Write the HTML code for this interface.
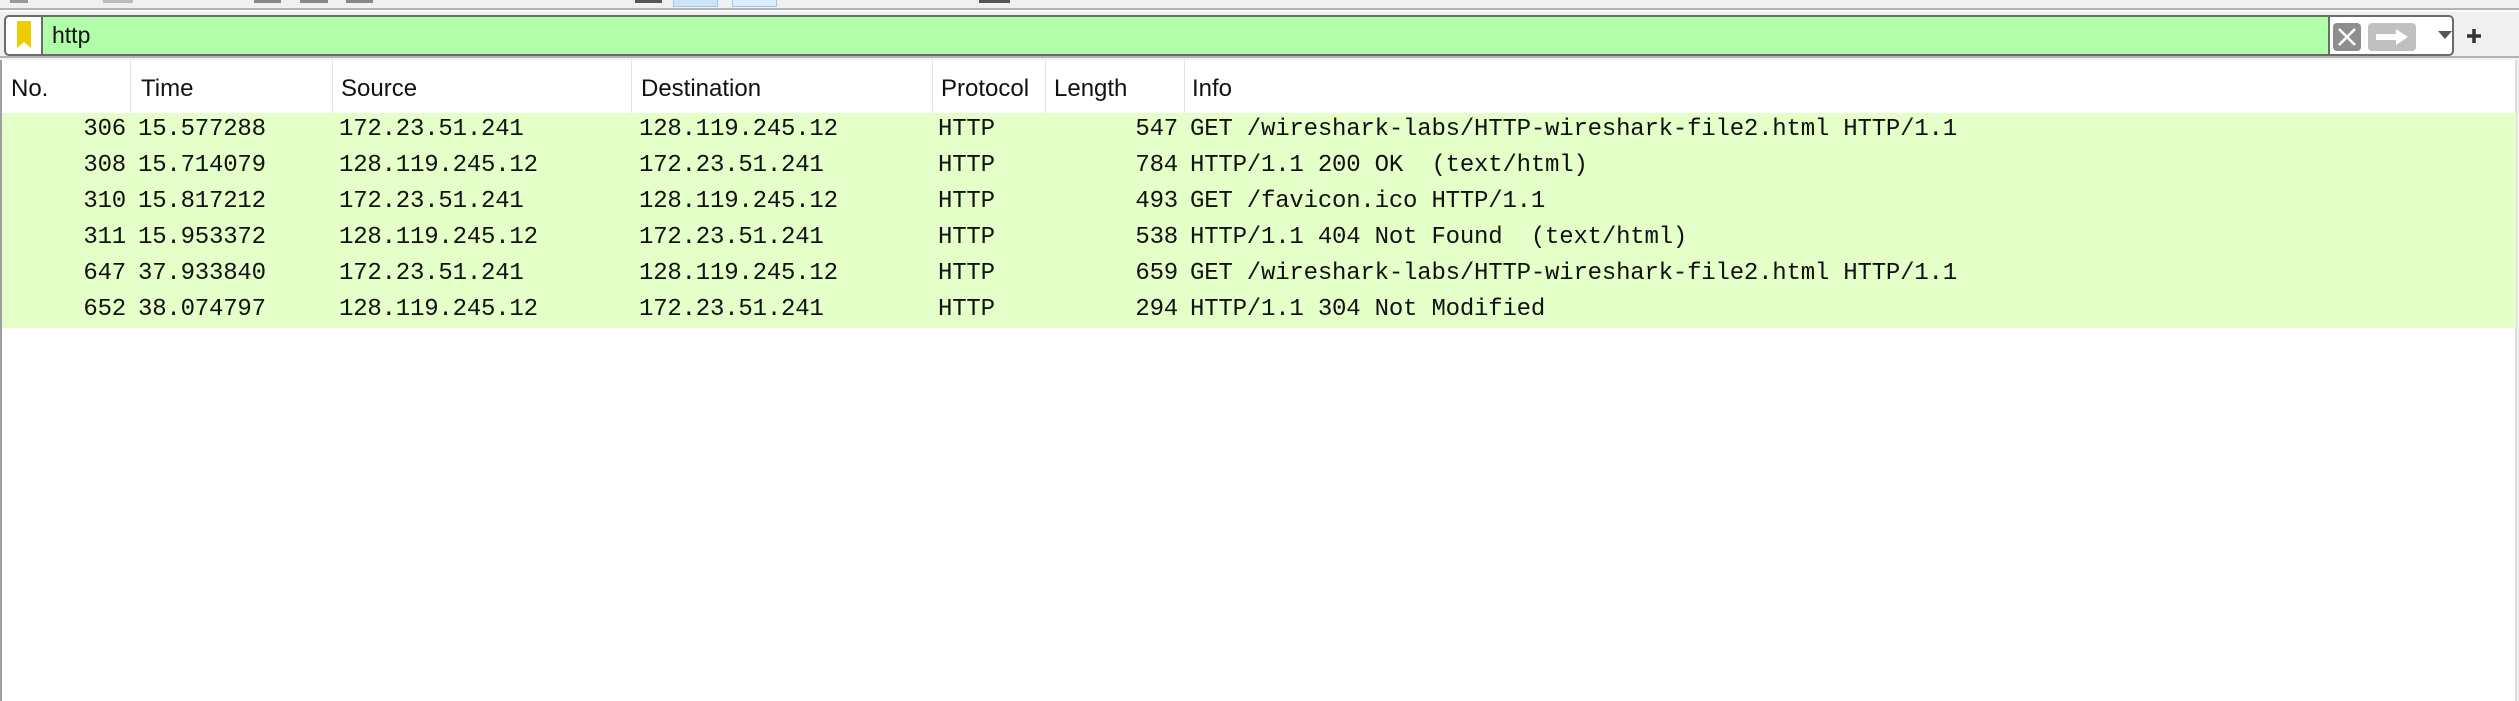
<!DOCTYPE html>
<html><head><meta charset="utf-8"><style>
body{margin:0;width:2519px;height:701px;background:#f0f0f0;position:relative;overflow:hidden;font-family:"Liberation Sans",sans-serif}
.a{position:absolute}
.mono{font-family:"Liberation Mono",monospace;font-size:24px;color:#111;white-space:pre;letter-spacing:-0.2px}
.h{font-size:24px;color:#111;white-space:pre}
</style></head><body>
<div class="a" style="left:10px;top:0;width:18px;height:3px;background:#999"></div>
<div class="a" style="left:103px;top:0;width:30px;height:3px;background:#bbb"></div>
<div class="a" style="left:254px;top:0;width:27px;height:3px;background:#888"></div>
<div class="a" style="left:300px;top:0;width:28px;height:3px;background:#888"></div>
<div class="a" style="left:346px;top:0;width:27px;height:3px;background:#888"></div>
<div class="a" style="left:635px;top:0;width:27px;height:3px;background:#555"></div>
<div class="a" style="left:673px;top:0;width:43px;height:6px;background:#cde4f7;border:1px solid #99c8ee;border-top:none"></div>
<div class="a" style="left:732px;top:0;width:43px;height:6px;background:#dcecfa;border:1px solid #99c8ee;border-top:none"></div>
<div class="a" style="left:979px;top:0;width:31px;height:3px;background:#555"></div>
<div class="a" style="left:0;top:8px;width:2519px;height:2px;background:#b4b4b4"></div>
<div class="a" style="left:0;top:10px;width:2519px;height:2px;background:#fafafa"></div>
<!-- filter bar -->
<div class="a" style="left:4px;top:15px;width:2446px;height:37px;border:2px solid #6b6b6b;border-radius:5px;background:#fff;overflow:hidden">
 <div class="a" style="left:35px;top:0;width:2285px;height:37px;background:#b1feaa;border-left:2px solid #6b6b6b;border-right:2px solid #6b6b6b"></div>
 <svg class="a" style="left:10px;top:4px" width="16" height="28"><path d="M1 0H15V27L8 21L1 27Z" fill="#eecc00"/></svg>
 <div class="a h" style="left:46px;top:5px;font-size:23px">http</div>
 <div class="a" style="left:2327px;top:6px;width:28px;height:28px;background:#8e8e8e;border-radius:4px"><svg width="28" height="28"><path d="M6 6L22 22M22 6L6 22" stroke="#fff" stroke-width="2.5"/></svg></div>
 <div class="a" style="left:2362px;top:6px;width:48px;height:28px;background:#c0c0c0;border-radius:4px"><svg width="48" height="28"><path d="M8 11H28V6L40 14L28 22V17H8Z" fill="#fff"/></svg></div>
 <svg class="a" style="left:2432px;top:14px" width="14" height="8"><path d="M0 0H14L7 8Z" fill="#555"/></svg>
</div>
<svg class="a" style="left:2465px;top:27px" width="18" height="18"><path d="M9 2V16M2 9H16" stroke="#333" stroke-width="3.5"/></svg>
<div class="a" style="left:0;top:56px;width:2519px;height:2px;background:#b4b4b4"></div>
<!-- list -->
<div class="a" style="left:0;top:60px;width:2517px;height:641px;background:#fff;border-left:2px solid #a0a0a0;border-right:2px solid #ddd;box-sizing:border-box"></div>
<div class="a" style="left:130px;top:60px;width:1px;height:53px;background:#e5e5e5"></div>
<div class="a" style="left:332px;top:60px;width:1px;height:53px;background:#e5e5e5"></div>
<div class="a" style="left:631px;top:60px;width:1px;height:53px;background:#e5e5e5"></div>
<div class="a" style="left:932px;top:60px;width:1px;height:53px;background:#e5e5e5"></div>
<div class="a" style="left:1045px;top:60px;width:1px;height:53px;background:#e5e5e5"></div>
<div class="a" style="left:1184px;top:60px;width:1px;height:53px;background:#e5e5e5"></div>
<div class="a h" style="left:11px;top:75px">No.</div>
<div class="a h" style="left:141px;top:75px">Time</div>
<div class="a h" style="left:341px;top:75px">Source</div>
<div class="a h" style="left:641px;top:75px">Destination</div>
<div class="a h" style="left:941px;top:75px">Protocol</div>
<div class="a h" style="left:1054px;top:75px">Length</div>
<div class="a h" style="left:1192px;top:75px">Info</div>
<div class="a" style="left:2px;top:113px;width:2514px;height:215px;background:#e4ffc7"></div>
<div class="a" style="left:0;top:113px">
<div class="a mono" style="left:0;top:-1px;width:126px;text-align:right;line-height:36px">306
308
310
311
647
652</div>
<div class="a mono" style="left:138px;top:-1px;line-height:36px">15.577288
15.714079
15.817212
15.953372
37.933840
38.074797</div>
<div class="a mono" style="left:339px;top:-1px;line-height:36px">172.23.51.241
128.119.245.12
172.23.51.241
128.119.245.12
172.23.51.241
128.119.245.12</div>
<div class="a mono" style="left:639px;top:-1px;line-height:36px">128.119.245.12
172.23.51.241
128.119.245.12
172.23.51.241
128.119.245.12
172.23.51.241</div>
<div class="a mono" style="left:938px;top:-1px;line-height:36px">HTTP
HTTP
HTTP
HTTP
HTTP
HTTP</div>
<div class="a mono" style="left:1100px;top:-1px;width:78px;text-align:right;line-height:36px">547
784
493
538
659
294</div>
<div class="a mono" style="left:1190px;top:-1px;line-height:36px">GET /wireshark-labs/HTTP-wireshark-file2.html HTTP/1.1
HTTP/1.1 200 OK  (text/html)
GET /favicon.ico HTTP/1.1
HTTP/1.1 404 Not Found  (text/html)
GET /wireshark-labs/HTTP-wireshark-file2.html HTTP/1.1
HTTP/1.1 304 Not Modified</div>
</div>
</body></html>
